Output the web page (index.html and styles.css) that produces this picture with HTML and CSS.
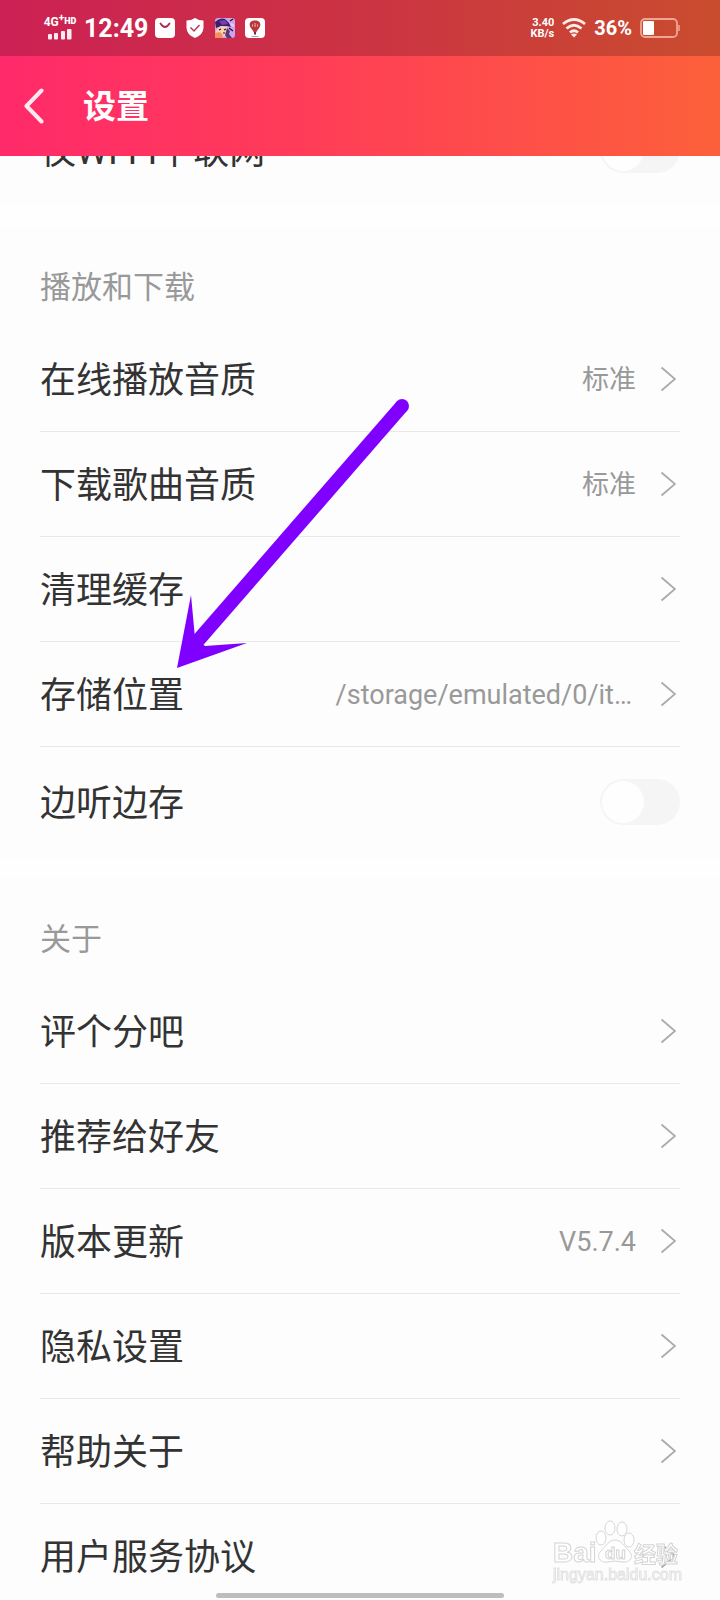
FILE: index.html
```html
<!DOCTYPE html>
<html lang="zh-CN">
<head>
<meta charset="utf-8">
<meta name="viewport" content="width=device-width, initial-scale=1">
<title>设置</title>
<link rel="stylesheet" href="styles.css">
</head>
<body>
<svg class="defs" aria-hidden="true">
  <symbol id="chevron" viewBox="0 0 16 26"><path d="M1.500 1.500L15 13L1.500 24.500" fill="none" stroke="currentColor" stroke-width="1.800"/></symbol>
</svg>
<header class="top">
  <div class="status">
    <div class="status-group">
      <div class="network">
        <span class="network-type">4G<sup>+</sup><b>HD</b></span>
        <svg width="24" height="12" viewBox="0 0 24 12" fill="#ffe9f0"><rect x="0" y="6" width="4" height="5.500" rx="1"/><rect x="6" y="5" width="4" height="6.500" rx="1"/><rect x="13" y="3" width="4" height="8.500" rx="1"/><rect x="19" y="1" width="4.500" height="10.500" rx="1"/></svg>
      </div>
      <span class="clock">12:49</span>
      <svg class="app" viewBox="0 0 20 20"><rect width="20" height="20" rx="4" fill="#fff"/><path d="M5.500 5.500Q10 12.500 14.500 5.500" fill="none" stroke="#a82d50" stroke-width="1.800" stroke-linecap="round"/></svg>
      <svg class="app" viewBox="0 0 20 20"><path d="M10 0Q14 2.500 18.500 2.500V10Q18 17 10 20Q2 17 1.500 10V2.500Q6 2.500 10 0Z" fill="#fff"/><path d="M5.500 9.500L9 13L14.500 7" fill="none" stroke="#b43a55" stroke-width="1.500"/></svg>
      <svg class="app" viewBox="0 0 20 20"><rect width="20" height="20" rx="3" fill="#cda3ec"/><path d="M0 4Q5-1 10 1L14 5L16 9L12 8L6 8L1 10Z" fill="#38206b"/><path d="M4 3L10 2L13 6L7 7Z" fill="#7641ab"/><path d="M2 11L6 8L12 9L13 13L11 18L6 19L0 16Z" fill="#fbd2ad"/><path d="M0 15L5 14L8 17L7 20H0Z" fill="#ef9163"/><path d="M12 10L15 13L14 16L17 20H12L10 17Z" fill="#563778"/><path d="M4 12L6 11M9 12L11 11M8 15L10 15M14 10L18 13M15 3L18 1" stroke="#171033" stroke-width="1.200"/><path d="M15 5L19 6V9L16 8Z" fill="#f2c5f2"/></svg>
      <svg class="app" viewBox="0 0 20 20"><rect width="20" height="20" rx="4" fill="#fff"/><path d="M10 2.500C3.500 2.500 3.500 8 7 11.500L9 14.500H11L13 11.500C16.500 8 16.500 2.500 10 2.500Z" fill="#b8383c"/><path d="M7.500 8.500V6.500M10 9V5M12.500 8.500V6.500" stroke="#f1b7b5"/><path d="M9 14H11V16.500H9Z" fill="#792b32"/><path d="M6.500 18.500H13.500" stroke="#a3a6c5"/></svg>
    </div>
    <div class="status-group status-right">
      <div class="speed"><span>3.40</span><span>KB/s</span></div>
      <svg width="24" height="20" viewBox="0 0 24 20" fill="none" stroke="#ffece7" stroke-width="2.800"><path d="M1 6Q12-3 23 6M4.500 10.500Q12 4 19.500 10.500M8 14.500Q12 11 16 14.500"/><path d="M9 16.500Q12 14.500 15 16.500L12 19.500Z" fill="#ffece7" stroke="none"/></svg>
      <span class="percent">36%</span>
      <svg width="40" height="20" viewBox="0 0 40 20"><rect x="1" y="1" width="36" height="18" rx="4" fill="none" stroke="#f0a595" stroke-width="1.800"/><rect x="3" y="3" width="11" height="14" rx="1" fill="#fff"/><path d="M39 7V13" stroke="#f0a595" stroke-width="1.500"/></svg>
    </div>
  </div>
  <div class="bar">
    <button class="back" type="button" aria-label="返回"><svg width="20" height="36" viewBox="0 0 20 36"><path d="M17.500 2.500L2.500 18L17.500 33.500" fill="none" stroke="#ffe9f0" stroke-width="4" stroke-linecap="round" stroke-linejoin="round"/></svg></button>
    <h1 class="title">设置</h1>
  </div>
</header>
<main class="content">
  <section class="group">
    <label class="row row-switch"><span class="name">仅WI-FI下联网</span><input class="switch" type="checkbox"></label>
  </section>
  <section class="group">
    <h2 class="heading">播放和下载</h2>
    <button class="row" type="button"><span class="name">在线播放音质</span><span class="value">标准</span><svg class="chevron"><use href="#chevron"/></svg></button>
    <button class="row" type="button"><span class="name">下载歌曲音质</span><span class="value">标准</span><svg class="chevron"><use href="#chevron"/></svg></button>
    <button class="row" type="button"><span class="name">清理缓存</span><svg class="chevron"><use href="#chevron"/></svg></button>
    <button class="row" type="button"><span class="name">存储位置</span><span class="value value-path">/storage/emulated/0/it…</span><svg class="chevron"><use href="#chevron"/></svg></button>
    <label class="row row-switch"><span class="name">边听边存</span><input class="switch" type="checkbox"></label>
  </section>
  <section class="group">
    <h2 class="heading">关于</h2>
    <button class="row" type="button"><span class="name">评个分吧</span><svg class="chevron"><use href="#chevron"/></svg></button>
    <button class="row" type="button"><span class="name">推荐给好友</span><svg class="chevron"><use href="#chevron"/></svg></button>
    <button class="row" type="button"><span class="name">版本更新</span><span class="value">V5.7.4</span><svg class="chevron"><use href="#chevron"/></svg></button>
    <button class="row" type="button"><span class="name">隐私设置</span><svg class="chevron"><use href="#chevron"/></svg></button>
    <button class="row" type="button"><span class="name">帮助关于</span><svg class="chevron"><use href="#chevron"/></svg></button>
    <button class="row" type="button"><span class="name">用户服务协议</span><svg class="chevron"><use href="#chevron"/></svg></button>
  </section>
  <svg class="arrow" width="236" height="274" viewBox="0 0 236 274" fill="#8000ff"><path d="M225 8L18 246" stroke="#8000ff" stroke-width="14"/><circle cx="225" cy="8" r="7"/><path d="M0 270L14 197L18 240L28 248L70 245Z"/></svg>
</main>
<svg class="watermark" width="136" height="68" viewBox="0 0 136 68" fill="#fff" stroke="#d4d4d4">
  <g class="mark"><text x="3" y="42" font-size="28">Bai</text><text x="84" y="42" font-size="22">经验</text></g>
  <path d="M65 20C71 20 74 26 79 31C85 37 79 43 73 42Q65 40 57 42C51 43 45 37 51 31C56 26 59 20 65 20Z"/>
  <ellipse cx="51" cy="18" rx="5" ry="7"/><ellipse cx="60" cy="8" rx="5" ry="7"/><ellipse cx="72" cy="9" rx="5" ry="7"/><ellipse cx="79" cy="20" rx="5" ry="7"/>
  <g class="mark"><text x="55" y="39" font-size="17">du</text></g>
  <text class="site" x="3" y="60" font-size="16">jingyan.baidu.com</text>
</svg>
<div class="home"></div>
</body>
</html>
```
FILE: styles.css
```css
* { box-sizing: border-box; }

body {
  height: 100vh;
  margin: 0;
  overflow: hidden;
  background: #fefefe;
  color: #333;
  font-family: Roboto, "Noto Sans CJK SC", sans-serif;
}

.defs { position: absolute; width: 0; height: 0; }

.top {
  position: relative;
  z-index: 1;
  background: linear-gradient(90deg, #ff2a6a, #ff3c58 42%, #fc603a);
  color: #fff;
}

.status {
  display: flex;
  align-items: center;
  justify-content: space-between;
  height: 56px;
  padding: 0 40px 0 42px;
  background: rgba(0, 0, 0, 0.2);
}

.status-group { display: flex; align-items: center; gap: 10px; }
.status-right { gap: 8px; }
.app { flex: none; width: 20px; height: 20px; }

.network { display: flex; flex-direction: column; align-items: center; width: 36px; }
.network-type { font-size: 12px; line-height: 11px; font-weight: 700; white-space: nowrap; }
.network-type sup { font-size: 10px; line-height: 0; }
.network-type b { font-size: 9px; vertical-align: 2px; }
.clock { width: 61px; margin-left: -4px; font-size: 25px; font-weight: 700; }
.speed { display: flex; flex-direction: column; align-items: flex-end; font-size: 11px; line-height: 11px; font-weight: 700; }
.percent { font-size: 20px; font-weight: 700; }

.bar { display: flex; align-items: center; gap: 39px; height: 100px; padding: 0 24px; }
.back { display: flex; padding: 0; border: 0; background: none; }
.title { margin: 0; padding-top: 2px; font-size: 33px; line-height: 48px; font-weight: 600; }

.content {
  position: relative;
  display: flex;
  flex-direction: column;
  gap: 20px;
  margin-top: -62px;
}

.group { background: #fdfdfd; }

.heading {
  height: 100px;
  margin: 0;
  padding: 38px 40px 0;
  color: #999;
  font-size: 31px;
  line-height: 48px;
  font-weight: 400;
}

.row {
  position: relative;
  display: flex;
  align-items: center;
  width: 100%;
  height: 105px;
  padding: 0 44px 0 40px;
  border: 0;
  background: none;
  color: inherit;
  font: inherit;
  text-align: left;
}

.row:not(:last-child)::after {
  content: "";
  position: absolute;
  right: 40px;
  bottom: -1px;
  left: 40px;
  height: 1px;
  background: #e9e9e9;
}

.row-switch { height: 112px; padding-right: 40px; }
.name { flex: 1; padding-top: 4px; font-size: 36px; line-height: 52px; }
.value { margin-right: 24px; padding-top: 2px; color: #999; font-size: 27px; line-height: 40px; }
.value-path { margin-right: 28px; }
.chevron { flex: none; width: 16px; height: 26px; color: #aaa; }

.switch {
  appearance: none;
  display: flex;
  width: 80px;
  height: 46px;
  margin: 0;
  padding: 2px;
  border-radius: 23px;
  background: #f5f5f5;
}

.switch::before {
  content: "";
  width: 42px;
  height: 42px;
  border-radius: 50%;
  background: #fefefe;
}

.switch:checked { justify-content: flex-end; }

.arrow { position: absolute; top: 304px; left: 177px; pointer-events: none; }

.watermark {
  position: fixed;
  right: 34px;
  bottom: 12px;
  pointer-events: none;
  font-family: "Liberation Sans", "Noto Sans CJK SC", sans-serif;
}

.watermark .mark { font-weight: 700; }
.watermark .site { stroke: #e2e2e2; }

.home {
  position: fixed;
  bottom: 2px;
  left: 30%;
  width: 40%;
  height: 5px;
  border-radius: 3px;
  background: #bdbdbd;
}
```
